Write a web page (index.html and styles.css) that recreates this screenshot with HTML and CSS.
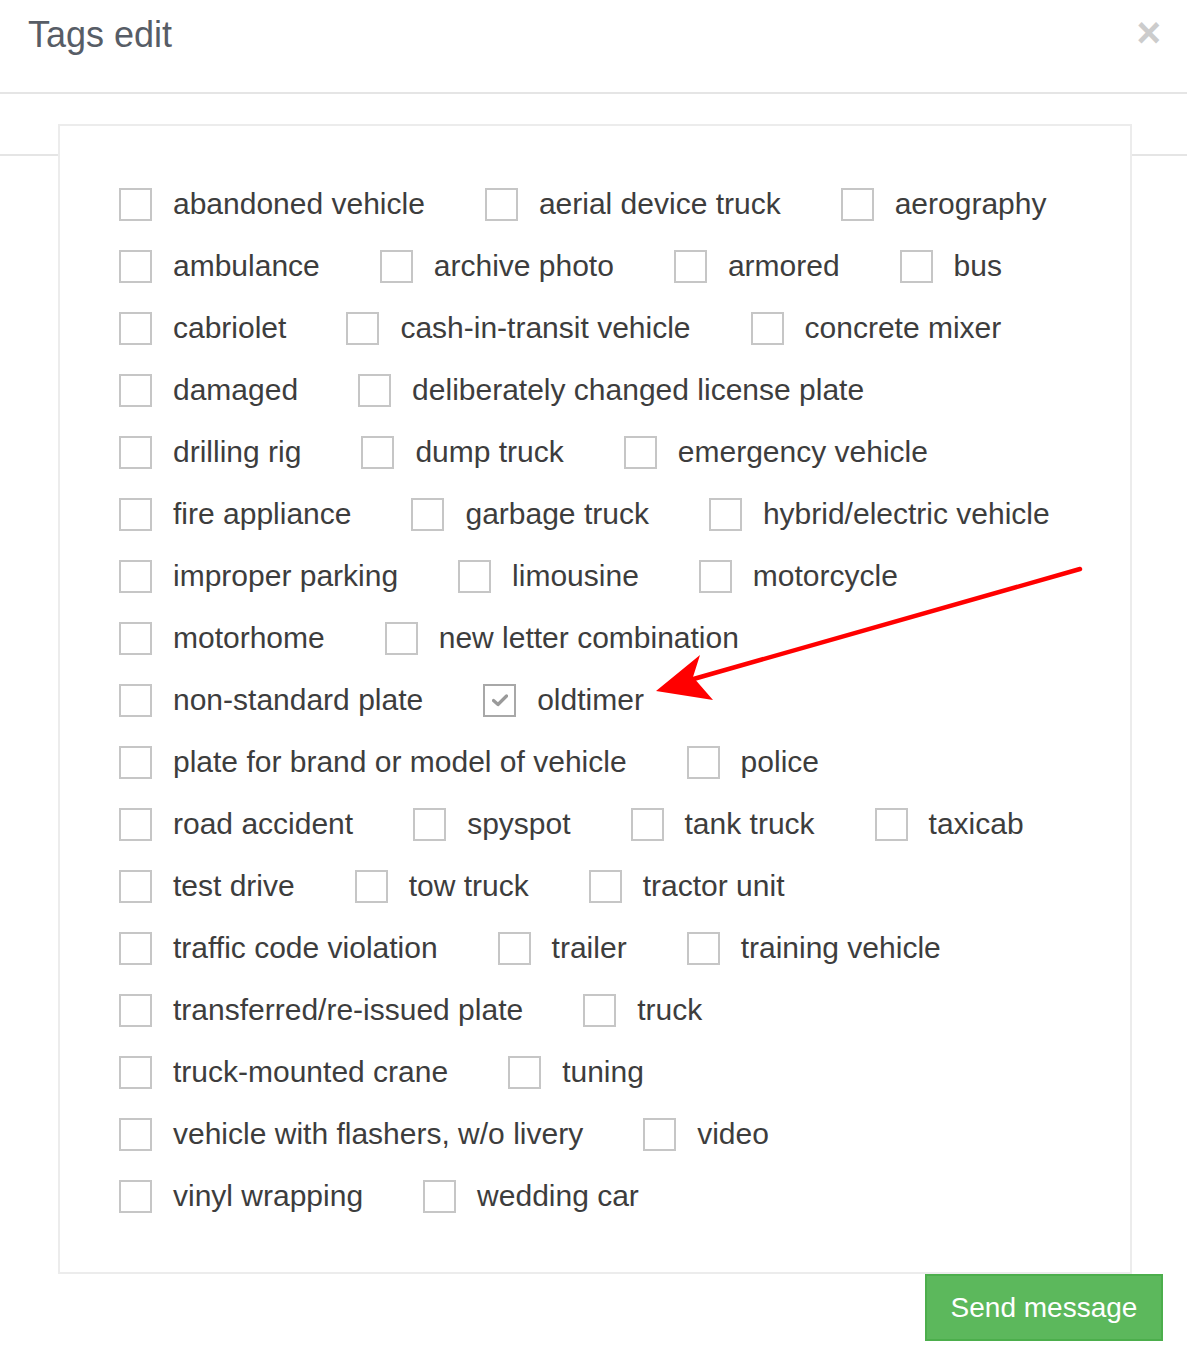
FILE: index.html
```html
<!DOCTYPE html>
<html>
<head>
<meta charset="utf-8">
<link rel="stylesheet" href="styles.css">
</head>
<body>
<div class="modal">
  <div class="modal-header">
    <h4 class="modal-title">Tags edit</h4>
    <span class="close">×</span>
  </div>
  <div class="modal-body">
    <div class="tab-line"></div>
    <div class="panel">
      <div class="row"><label class="tag"><span class="box"></span>abandoned vehicle</label><label class="tag"><span class="box"></span>aerial device truck</label><label class="tag"><span class="box"></span>aerography</label></div>
      <div class="row"><label class="tag"><span class="box"></span>ambulance</label><label class="tag"><span class="box"></span>archive photo</label><label class="tag"><span class="box"></span>armored</label><label class="tag"><span class="box"></span>bus</label></div>
      <div class="row"><label class="tag"><span class="box"></span>cabriolet</label><label class="tag"><span class="box"></span>cash-in-transit vehicle</label><label class="tag"><span class="box"></span>concrete mixer</label></div>
      <div class="row"><label class="tag"><span class="box"></span>damaged</label><label class="tag"><span class="box"></span>deliberately changed license plate</label></div>
      <div class="row"><label class="tag"><span class="box"></span>drilling rig</label><label class="tag"><span class="box"></span>dump truck</label><label class="tag"><span class="box"></span>emergency vehicle</label></div>
      <div class="row"><label class="tag"><span class="box"></span>fire appliance</label><label class="tag"><span class="box"></span>garbage truck</label><label class="tag"><span class="box"></span>hybrid/electric vehicle</label></div>
      <div class="row"><label class="tag"><span class="box"></span>improper parking</label><label class="tag"><span class="box"></span>limousine</label><label class="tag"><span class="box"></span>motorcycle</label></div>
      <div class="row"><label class="tag"><span class="box"></span>motorhome</label><label class="tag"><span class="box"></span>new letter combination</label></div>
      <div class="row"><label class="tag"><span class="box"></span>non-standard plate</label><label class="tag"><span class="box checked"><svg class="check" width="16" height="13" viewBox="0 0 16 13"><path d="M1.5 6.5 L6 10.5 L14.5 2" fill="none" stroke="#9a9a9a" stroke-width="3.2" stroke-linecap="round" stroke-linejoin="round"/></svg></span>oldtimer</label></div>
      <div class="row"><label class="tag"><span class="box"></span>plate for brand or model of vehicle</label><label class="tag"><span class="box"></span>police</label></div>
      <div class="row"><label class="tag"><span class="box"></span>road accident</label><label class="tag"><span class="box"></span>spyspot</label><label class="tag"><span class="box"></span>tank truck</label><label class="tag"><span class="box"></span>taxicab</label></div>
      <div class="row"><label class="tag"><span class="box"></span>test drive</label><label class="tag"><span class="box"></span>tow truck</label><label class="tag"><span class="box"></span>tractor unit</label></div>
      <div class="row"><label class="tag"><span class="box"></span>traffic code violation</label><label class="tag"><span class="box"></span>trailer</label><label class="tag"><span class="box"></span>training vehicle</label></div>
      <div class="row"><label class="tag"><span class="box"></span>transferred/re-issued plate</label><label class="tag"><span class="box"></span>truck</label></div>
      <div class="row"><label class="tag"><span class="box"></span>truck-mounted crane</label><label class="tag"><span class="box"></span>tuning</label></div>
      <div class="row"><label class="tag"><span class="box"></span>vehicle with flashers, w/o livery</label><label class="tag"><span class="box"></span>video</label></div>
      <div class="row"><label class="tag"><span class="box"></span>vinyl wrapping</label><label class="tag"><span class="box"></span>wedding car</label></div>
    </div>
    <div class="actions">
      <button class="btn-send">Send message</button>
    </div>
  </div>
</div>
<svg class="arrow" width="1187" height="1361" viewBox="0 0 1187 1361">
  <line x1="1080" y1="569" x2="690" y2="680" stroke="#ff0000" stroke-width="4.5" stroke-linecap="round"/>
  <path d="M656 691 L700 655 L693 677 L713 700 Z" fill="#ff0000"/>
</svg>
</body>
</html>
```
FILE: styles.css
```css
html, body {
  margin: 0;
  padding: 0;
  background: #fff;
}
body {
  font-family: "Liberation Sans", Arial, sans-serif;
  color: #3d3d3d;
}
.modal {
  width: 1187px;
}
.modal-header {
  border-bottom: 2px solid #e5e5e5;
  display: flex;
  align-items: flex-start;
  justify-content: space-between;
  padding: 0 26px 0 28px;
  box-sizing: border-box;
  height: 94px;
}
.modal-title {
  margin: 14px 0 0 0;
  font-size: 36px;
  font-weight: normal;
  color: #575d66;
  line-height: 42px;
}
.close {
  font-size: 42px;
  font-weight: bold;
  color: #cccccc;
  line-height: 42px;
  margin-top: 12px;
}
.modal-body {
  padding-top: 30px;
}
.tab-line {
  height: 0;
  border-top: 2px solid #e5e5e5;
  margin-top: 30px;
}
.panel {
  margin: -32px 55px 0 58px;
  background: #fff;
  border: 2px solid #ececec;
  padding: 47px 0 45px 59px;
  position: relative;
}
.row {
  display: flex;
  align-items: center;
  height: 62px;
}
.tag {
  display: flex;
  align-items: center;
  font-size: 30px;
  margin-right: 60px;
  white-space: nowrap;
}
.box {
  width: 33px;
  height: 33px;
  box-sizing: border-box;
  border: 2px solid #c6c6c6;
  margin-right: 21px;
  display: flex;
  align-items: center;
  justify-content: center;
}
.box.checked {
  border-color: #a8a8a8;
}
.check {
  display: block;
}
.actions {
  display: flex;
  justify-content: flex-end;
  padding-right: 24px;
}
.btn-send {
  width: 238px;
  height: 67px;
  background: #5cb85c;
  border: 2px solid #4cae4c;
  color: #fff;
  font-family: "Liberation Sans", Arial, sans-serif;
  font-size: 28px;
  padding: 0;
  margin: 0;
}
.arrow {
  position: absolute;
  left: 0;
  top: 0;
  pointer-events: none;
}
```
